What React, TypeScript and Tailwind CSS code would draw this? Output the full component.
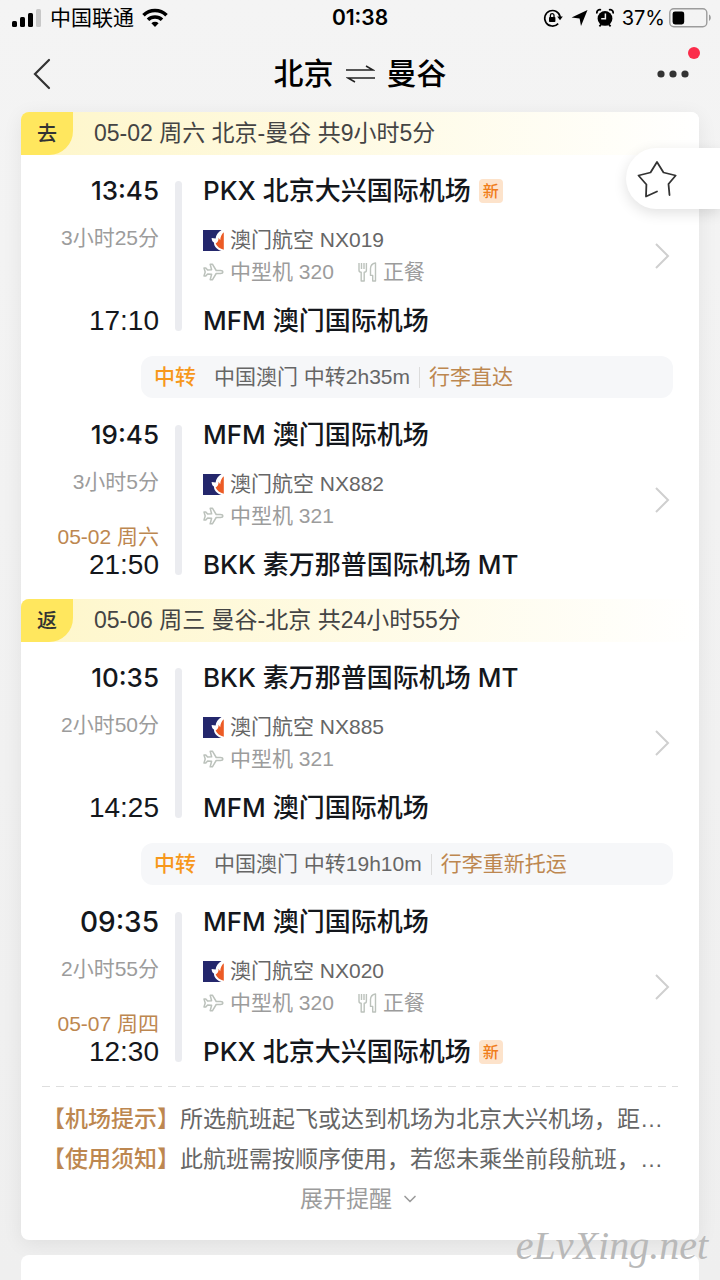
import { ChevronDown } from "lucide-react";

type Leg = {
    depTime: string;
    depAirport: string;
    duration: string;
    flight: string;
    plane: string;
    meal?: string;
    arrDate?: string;
    arrTime: string;
    arrAirport: string;
    depNew?: boolean;
    arrNew?: boolean;
    bigTime?: boolean;
};

type Trip = {
    tag: string;
    summary: string;
    legs: Leg[];
    transfer: string;
    luggage: string;
};

const trips: Trip[] = [
    {
        tag: "去",
        summary: "05-02 周六 北京-曼谷 共9小时5分",
        transfer: "中国澳门 中转2h35m",
        luggage: "行李直达",
        legs: [
            { depTime: "13:45", depAirport: "PKX 北京大兴国际机场", depNew: true, duration: "3小时25分", flight: "澳门航空 NX019", plane: "中型机 320", meal: "正餐", arrTime: "17:10", arrAirport: "MFM 澳门国际机场" },
            { depTime: "19:45", depAirport: "MFM 澳门国际机场", duration: "3小时5分", flight: "澳门航空 NX882", plane: "中型机 321", arrDate: "05-02 周六", arrTime: "21:50", arrAirport: "BKK 素万那普国际机场 MT" },
        ],
    },
    {
        tag: "返",
        summary: "05-06 周三 曼谷-北京 共24小时55分",
        transfer: "中国澳门 中转19h10m",
        luggage: "行李重新托运",
        legs: [
            { depTime: "10:35", depAirport: "BKK 素万那普国际机场 MT", duration: "2小时50分", flight: "澳门航空 NX885", plane: "中型机 321", arrTime: "14:25", arrAirport: "MFM 澳门国际机场" },
            { depTime: "09:35", depAirport: "MFM 澳门国际机场", bigTime: true, duration: "2小时55分", flight: "澳门航空 NX020", plane: "中型机 320", meal: "正餐", arrDate: "05-07 周四", arrTime: "12:30", arrAirport: "PKX 北京大兴国际机场", arrNew: true },
        ],
    },
];

const tips = [
    { title: "【机场提示】", text: "所选航班起飞或达到机场为北京大兴机场，距…" },
    { title: "【使用须知】", text: "此航班需按顺序使用，若您未乘坐前段航班，…" },
];

function StatusBar() {
    return (
        <div className="h-9 pl-3 pr-2 flex items-center justify-between text-black relative">
            <div className="flex items-center gap-2">
                <svg width="30" height="20" viewBox="0 0 30 20">
                    <rect x="0" y="13" width="5" height="6" rx="1.5" />
                    <rect x="8" y="9" width="5" height="10" rx="1.5" />
                    <rect x="16" y="5" width="5" height="14" rx="1.5" />
                    <rect x="24" y="1" width="5" height="18" rx="1.5" fill="#c8c8c8" />
                </svg>
                <span className="text-[21px]">中国联通</span>
                <svg width="26" height="20" viewBox="0 0 26 20" fill="none" stroke="#000" strokeWidth="3.6">
                    <path d="M1.5 7.2a16.5 16.5 0 0 1 23 0" />
                    <path d="M6 11.8a10.2 10.2 0 0 1 14 0" />
                    <path d="M13 19l-3.6-3.7a5.2 5.2 0 0 1 7.2 0z" fill="#000" stroke="none" />
                </svg>
            </div>
            <span className="absolute left-1/2 -translate-x-1/2 font-[Inter] font-semibold text-[21px]">01:38</span>
            <div className="flex items-center">
                <svg className="mr-2" width="20" height="20" viewBox="0 0 20 20">
                    <path d="M15.2 15.6A7.8 7.8 0 1 1 17.2 9" fill="none" stroke="#000" strokeWidth="1.6" />
                    <path d="M14.2 8.6h5.6L17 12.2z" />
                    <rect x="6" y="9" width="6.4" height="5" rx=".8" />
                    <path d="M7.4 9V7.4a1.8 1.8 0 0 1 3.6 0V9" fill="none" stroke="#000" strokeWidth="1.3" />
                </svg>
                <svg className="mr-2" width="17" height="18" viewBox="0 0 17 18">
                    <path d="M16.5 1L10 17 8.6 9.6.6 8.6z" />
                </svg>
                <svg className="mr-2" width="18" height="20" viewBox="0 0 18 20">
                    <circle cx="9" cy="10.4" r="7.4" />
                    <path d="M1 5.4A3 3 0 0 1 5 1.8M17 5.4a3 3 0 0 0-4-3.6M3.4 18.4l1.8-2M14.6 18.4l-1.8-2" stroke="#000" strokeWidth="1.8" fill="none" />
                    <path d="M9.4 5.6v5.2H5.2" stroke="#f3f3f3" strokeWidth="1.5" fill="none" />
                </svg>
                <span className="font-[Inter] text-xl">37%</span>
                <svg className="ml-1" width="43" height="20" viewBox="0 0 43 20">
                    <rect x=".8" y=".8" width="37" height="18" rx="4" fill="none" stroke="#9c9c9c" strokeWidth="1.4" />
                    <rect x="3.6" y="3.4" width="11.6" height="13" rx="2.4" />
                    <path d="M40 6.6c2.4 1.2 2.4 5.2 0 6.4z" fill="#9c9c9c" />
                </svg>
            </div>
        </div>
    );
}

function AirlineLogo() {
    return (
        <svg width="21" height="21" viewBox="0 0 21 21">
            <rect width="21" height="21" fill="#24276c" />
            <path d="M21 0h-2.500C15 2 13 5 12.600 8.600L8.600 8c.1 2.400 1 3.800 2.400 4.600-.4 3.600 3.400 7.400 7.500 8.400H21z" fill="#fff" />
            <path d="M20.800 2.200C18.600 4 17.400 6.800 17.200 10.200L15.600 7.800c0 2.800-.8 4.800-3 5.800 1.200 3 4.400 5.400 8.200 6.200z" fill="#ec5b25" />
        </svg>
    );
}

function PlaneIcon() {
    return (
        <svg width="21" height="18" viewBox="0 0 21 18" fill="none" stroke="#bcc2bc" strokeWidth="1.5" strokeLinejoin="round">
            <path d="M19.800 9c0-.9-1-1.500-2.400-1.500h-4.200L9.400 1.200H7.200l1.400 5.600-4 .2L2.800 5H1l1.200 4L1 13h1.800l1.800-2 4 .2-1.400 5.600h2.200l3.800-6.300h4.200c1.400 0 2.400-.6 2.400-1.500z" />
        </svg>
    );
}

function MealIcon() {
    return (
        <svg width="19" height="20" viewBox="0 0 19 20" fill="none" stroke="#bcc2bc" strokeWidth="1.4" strokeLinejoin="round">
            <path d="M1 1v7.200c0 1.200.8 2 2.200 2V19h3v-8.800c1.400 0 2.200-.8 2.200-2V1M3.500 1v6M6 1v6" />
            <path d="M17.500 1v18h-2.800v-5.600h-2.200V6.600c0-3 1.800-5 5-5.600z" />
        </svg>
    );
}

function Airport({ name, isNew }: { name: string; isNew?: boolean }) {
    return (
        <div className="flex items-center gap-2 font-['Inter','Noto_Sans_CJK_SC',sans-serif] text-[26px] leading-7 font-medium text-[#14171c]">
            {name}
            {isNew && <span className="rounded-sm bg-[#fde3cb] px-1 text-base leading-6 text-[#f07d1a]">新</span>}
        </div>
    );
}

function LegRow({ leg }: { leg: Leg }) {
    return (
        <div className="flex">
            <div className="w-[138px] flex flex-col items-end">
                <div className={`font-[Inter] font-medium leading-7 text-[#14171c] ${leg.bigTime ? "text-[28px]" : "text-[26px]"}`}>{leg.depTime}</div>
                <div className="mt-[19px] text-[21px] leading-7 text-[#9c9c9c]">{leg.duration}</div>
                <div className="mt-auto text-right">
                    {leg.arrDate && <div className="text-[21px] leading-7 text-[#bd8750]">{leg.arrDate}</div>}
                    <div className="text-[28px] leading-7 text-[#14171c]">{leg.arrTime}</div>
                </div>
            </div>
            <div className="my-1 ml-4 w-[7px] rounded-full bg-[#ebecf0]" />
            <div className="ml-[21px] flex-1">
                <Airport name={leg.depAirport} isNew={leg.depNew} />
                <div className="my-[19px] text-[21px] leading-8">
                    <div className="flex items-center gap-[6px] text-[#666]">
                        <AirlineLogo />
                        {leg.flight}
                    </div>
                    <div className="flex items-center gap-[6px] text-[#9c9c9c]">
                        <PlaneIcon />
                        {leg.plane}
                        {leg.meal && (
                            <span className="ml-[18px] flex items-center gap-[6px]">
                                <MealIcon />
                                {leg.meal}
                            </span>
                        )}
                    </div>
                </div>
                <Airport name={leg.arrAirport} isNew={leg.arrNew} />
            </div>
            <button aria-label="航班详情" className="mr-[29px] self-center">
                <svg width="16" height="28" viewBox="0 0 16 28" fill="none" stroke="#cfcfcf" strokeWidth="2">
                    <path d="M2 2l12 12L2 26" />
                </svg>
            </button>
        </div>
    );
}

function TripSection({ trip }: { trip: Trip }) {
    return (
        <section className="pb-5">
            <div className="flex h-[43px] items-center rounded-t-lg bg-linear-to-r from-[#fef6c9] to-white">
                <span className="flex h-full w-[52px] items-center justify-center rounded-tl-lg rounded-br-3xl bg-[#ffe75e] text-xl font-medium text-[#333]">{trip.tag}</span>
                <h2 className="ml-[21px] text-[23px] text-[#444]">{trip.summary}</h2>
            </div>
            <div className="pt-[22px]">
                <LegRow leg={trip.legs[0]} />
                <div className="mt-[21px] mb-[23px] ml-[120px] mr-[26px] flex h-[42px] items-center rounded-xl bg-[#f6f7f9] pl-[13px] text-[21px]">
                    <span className="font-medium text-[#f7981c]">中转</span>
                    <span className="ml-[18px] text-[#666]">{trip.transfer}</span>
                    <span className="mx-[9px] h-[21px] w-px bg-[#dcdcdc]" />
                    <span className="text-[#bd8750]">{trip.luggage}</span>
                </div>
                <LegRow leg={trip.legs[1]} />
            </div>
        </section>
    );
}

export default function App() {
    return (
        <main className="relative h-screen overflow-hidden bg-linear-to-b from-[#f4f4f4] to-[#efefef] font-['Liberation_Sans','Noto_Sans_CJK_SC',sans-serif]">
            <StatusBar />
            <header className="relative grid h-[76px] grid-cols-[1fr_auto_1fr] items-center px-[31px] text-black">
                <button aria-label="返回" className="justify-self-start">
                    <svg width="21" height="32" viewBox="0 0 21 32" fill="none" stroke="#333" strokeWidth="2.2" strokeLinecap="round">
                        <path d="M18 2L4 16l14 14" />
                    </svg>
                </button>
                <h1 className="flex items-center gap-3 text-[30px] leading-10 font-medium">
                    北京
                    <svg width="29" height="18" viewBox="0 0 29 18" fill="none" stroke="#222" strokeWidth="1.5">
                        <path d="M0 5h27l-7-4M29 13H2l7 4" />
                    </svg>
                    曼谷
                </h1>
                <button aria-label="更多" className="justify-self-end">
                    <svg width="32" height="8" viewBox="0 0 32 8" fill="#333">
                        <circle cx="4" cy="4" r="3.6" />
                        <circle cx="16" cy="4" r="3.6" />
                        <circle cx="28" cy="4" r="3.6" />
                    </svg>
                </button>
                <span className="absolute top-[11px] right-5 h-3 w-3 rounded-full bg-[#fb2c4a]" />
            </header>

            <div className="mx-[21px] rounded-lg bg-white shadow-[0_4px_20px_rgba(0,0,0,0.07)]">
                {trips.map((trip) => (
                    <TripSection key={trip.tag} trip={trip} />
                ))}
                <div className="mx-[21px] h-px bg-[repeating-linear-gradient(90deg,#dedede_0_8px,transparent_8px_14px)]" />
                <div className="mt-3 px-[21px] text-[23px] leading-10">
                    {tips.map((tip) => (
                        <p key={tip.title} className="flex">
                            <span className="font-medium text-[#bd8750]">{tip.title}</span>
                            <span className="text-[#666]">{tip.text}</span>
                        </p>
                    ))}
                </div>
                <button className="flex w-full items-center justify-center gap-2 pb-[21px] text-[23px] leading-10 text-[#9c9c9c]">
                    展开提醒
                    <ChevronDown size={20} strokeWidth={2} />
                </button>
            </div>
            <div className="mx-[21px] mt-[15px] h-20 rounded-lg bg-white" />

            {/* favourite tab, sticks out of the right edge */}
            <button aria-label="收藏" className="absolute top-[148px] right-0 flex h-[61px] w-[94px] items-center rounded-l-full bg-white pl-[11px] shadow-[0_4px_14px_rgba(0,0,0,0.12)]">
                <svg width="40" height="38" viewBox="0 0 40 38" fill="none" stroke="#333" strokeWidth="1.8" strokeLinecap="round" strokeLinejoin="round">
                    <path d="M20 31.500L9 36.500l.4-12L1.500 15.500l12-3L20 2l6.500 10.500 12.200 3-7.200 8.500L32.500 35" />
                </svg>
            </button>

            <div className="absolute right-3 bottom-1 font-['Liberation_Serif',serif] text-[40px] italic text-[#b9b9b9]">eLvXing.net</div>
        </main>
    );
}
